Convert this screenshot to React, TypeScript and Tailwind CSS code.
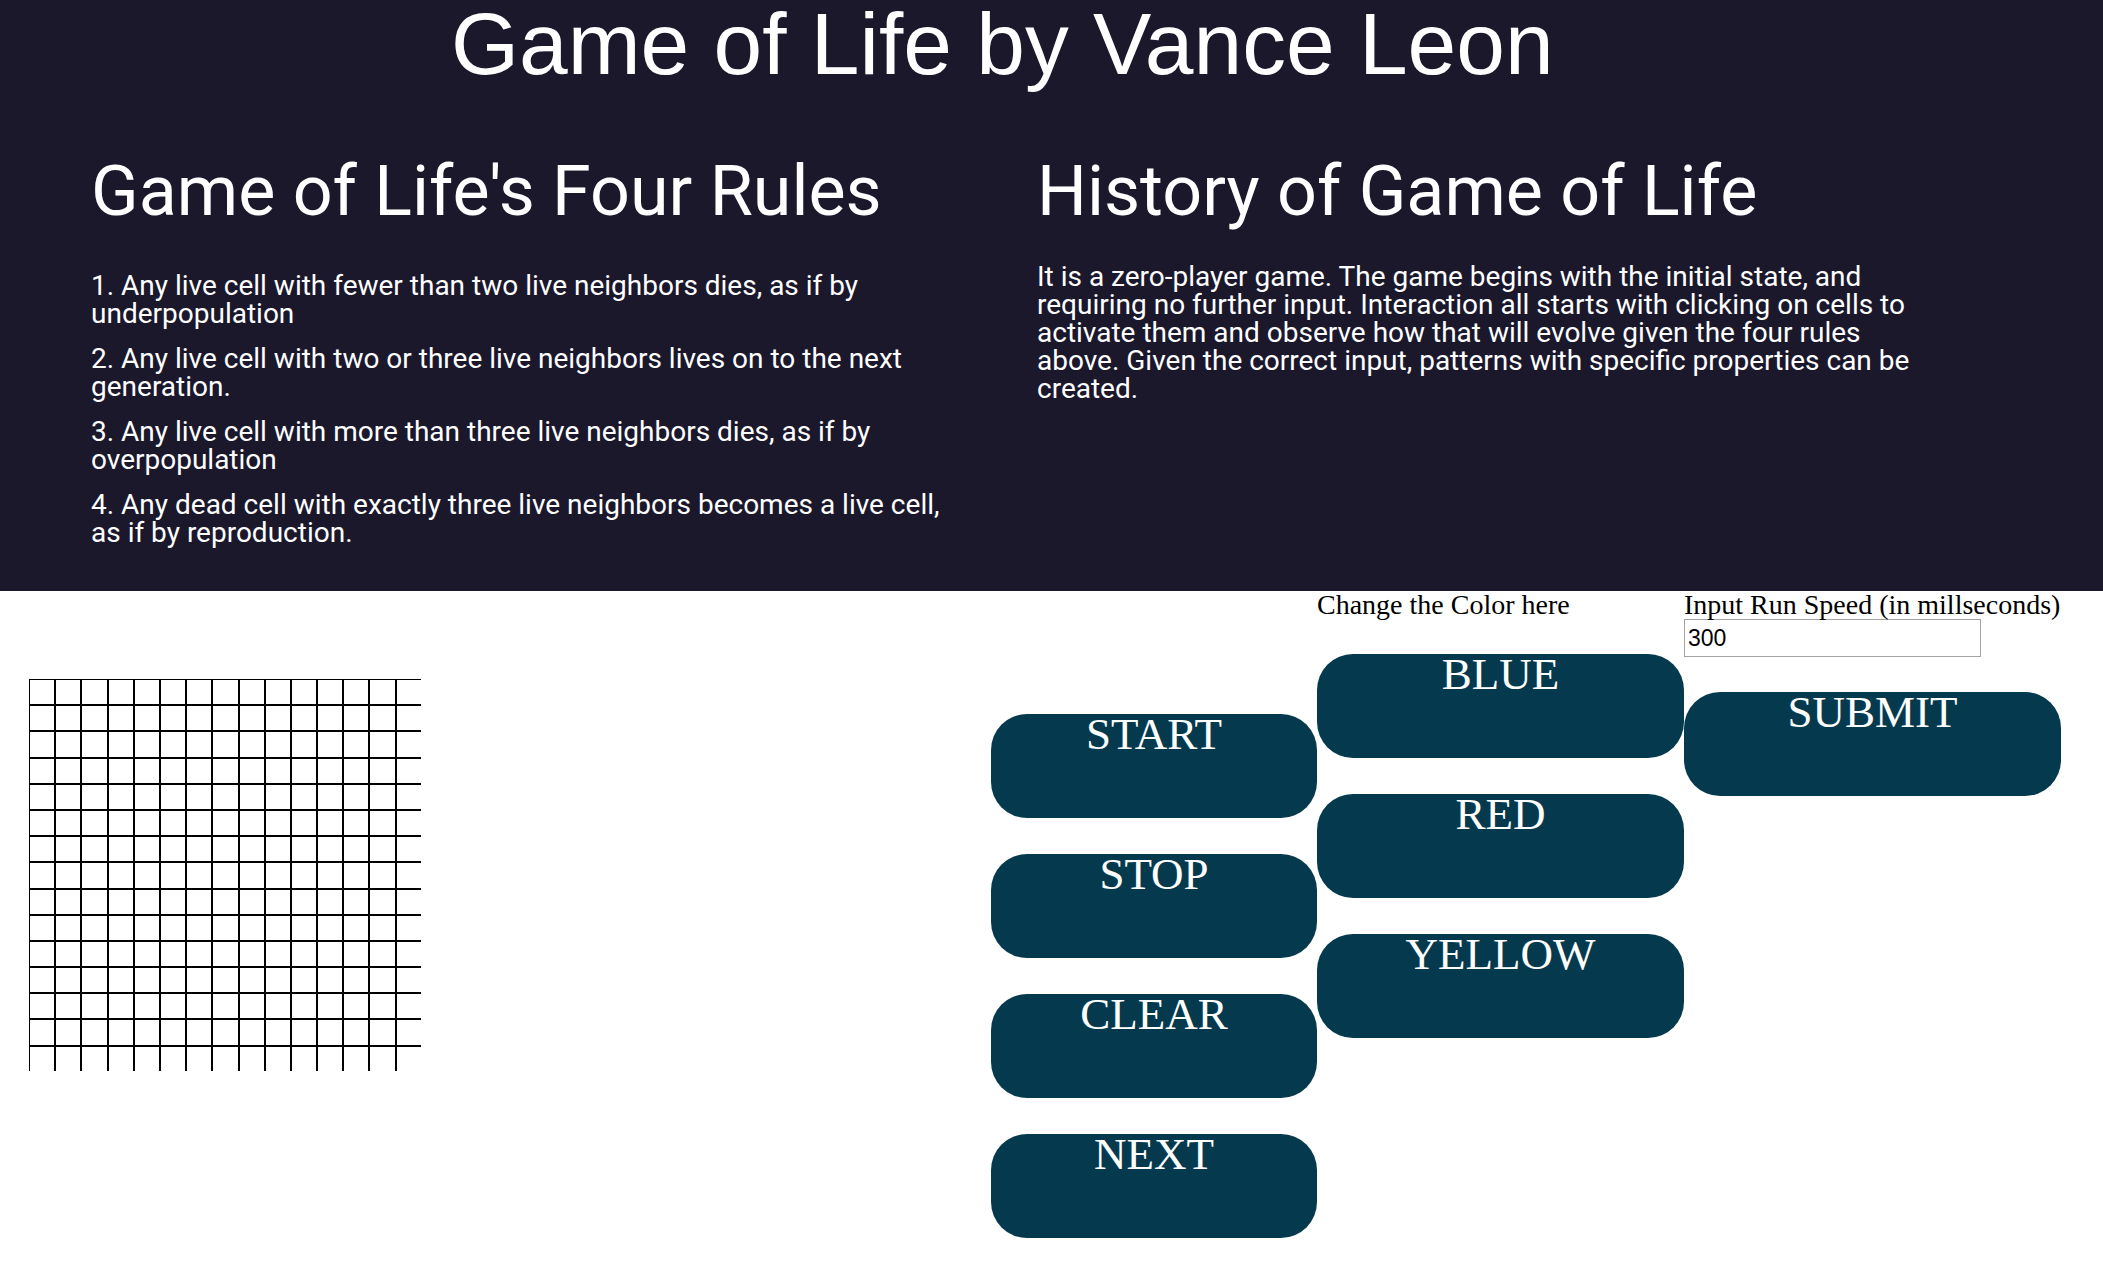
import React from "react";

const rules = [
  "1. Any live cell with fewer than two live neighbors dies, as if by underpopulation",
  "2. Any live cell with two or three live neighbors lives on to the next generation.",
  "3. Any live cell with more than three live neighbors dies, as if by overpopulation",
  "4. Any dead cell with exactly three live neighbors becomes a live cell, as if by reproduction.",
];

function GameButton({ label, className = "" }: { label: string; className?: string }) {
  return (
    <button
      className={`flex h-[104px] w-full items-start justify-center rounded-[36px] bg-[#053a4e] font-['Liberation_Serif',serif] text-[45px] leading-[41px] text-white ${className}`}
    >
      {label}
    </button>
  );
}

function Board() {
  const cells = Array.from({ length: 16 * 16 });
  return (
    <div className="mt-[88px] ml-[29px] h-[392px] w-[392px] shrink-0 overflow-hidden">
      <div className="grid grid-cols-[repeat(16,26.2px)]">
        {cells.map((_, i) => (
          <div key={i} className="h-[26.2px] w-[26.2px] border border-black bg-white" />
        ))}
      </div>
    </div>
  );
}

export default function App() {
  return (
    <div className="min-h-screen bg-white">
      <header className="h-[591px] bg-[#1b182c] text-white">
        <h1 className="pl-[451px] font-['Liberation_Sans',Arial,sans-serif] text-[87.5px] leading-[88px]">
          Game of Life by Vance Leon
        </h1>

        <div className="mt-[62px] flex gap-[76px] pl-[91px] font-['Roboto',sans-serif]">
          <section className="w-[870px]">
            <h2 className="text-[70px] leading-[82px]">Game of Life's Four Rules</h2>
            <div className="mt-[40px] flex flex-col gap-[17px] text-[28px] leading-[28px]">
              {rules.map((r) => (
                <p key={r}>{r}</p>
              ))}
            </div>
          </section>

          <section className="w-[885px]">
            <h2 className="text-[70px] leading-[82px]">History of Game of Life</h2>
            <p className="mt-[31px] text-[28px] leading-[28px]">
              It is a zero-player game. The game begins with the initial state, and requiring no
              further input. Interaction all starts with clicking on cells to activate them and
              observe how that will evolve given the four rules above. Given the correct input,
              patterns with specific properties can be created.
            </p>
          </section>
        </div>
      </header>

      <main className="flex items-start">
        <Board />

        <div className="mt-[123px] ml-[570px] flex w-[326px] shrink-0 flex-col gap-[36px]">
          <GameButton label="START" />
          <GameButton label="STOP" />
          <GameButton label="CLEAR" />
          <GameButton label="NEXT" />
        </div>

        <div className="w-[367px] shrink-0">
          <label className="block font-['Liberation_Serif',serif] text-[28px] leading-none text-black">
            Change the Color here
          </label>
          <div className="mt-[35px] flex flex-col gap-[36px]">
            <GameButton label="BLUE" />
            <GameButton label="RED" />
            <GameButton label="YELLOW" />
          </div>
        </div>

        <div className="w-[377px] shrink-0">
          <label className="block font-['Liberation_Serif',serif] text-[28px] leading-none text-black">
            Input Run Speed (in millseconds)
          </label>
          <input
            defaultValue="300"
            className="block h-[38px] w-[297px] border border-[#a3a3a3] px-[3px] font-['Liberation_Sans',Arial,sans-serif] text-[23px] text-black outline-none"
          />
          <GameButton label="SUBMIT" className="mt-[35px]" />
        </div>
      </main>
    </div>
  );
}
